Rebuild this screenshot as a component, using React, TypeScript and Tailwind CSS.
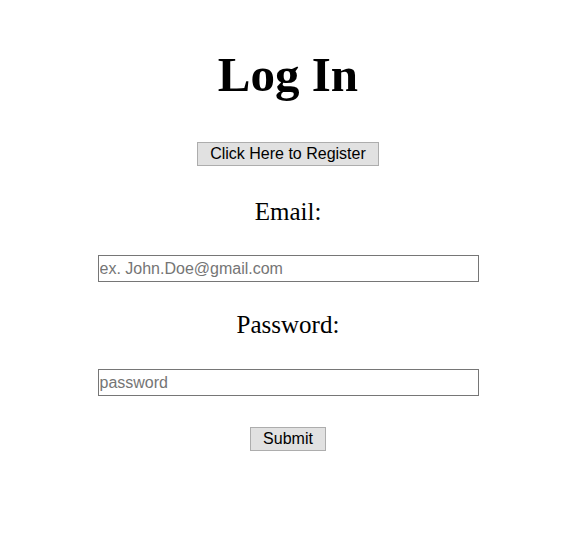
const serif = "font-['Liberation_Serif',serif]";
const sans = "font-['Liberation_Sans',sans-serif]";

export default function App() {
  return (
    <div className="min-h-[548px] w-full bg-white flex flex-col items-center pt-[47px] pr-[3px]">
      <h1 className={`${serif} text-[49px] leading-[56px] font-bold text-black`}>Log In</h1>

      <button
        className={`${sans} mt-[39px] h-[24px] px-[12.5px] bg-[#e1e1e1] border border-[#adadad] text-[16px] leading-none text-black`}
      >
        Click Here to Register
      </button>

      <label className={`${serif} mt-[32px] text-[25px] leading-[28px] text-black`}>Email:</label>
      <input
        type="text"
        placeholder="ex. John.Doe@gmail.com"
        className={`${sans} mt-[29px] w-[381px] h-[27px] border border-[#767676] px-[1px] text-[16px] placeholder:text-[#757575] outline-none`}
      />

      <label className={`${serif} mt-[29px] text-[25px] leading-[28px] text-black`}>Password:</label>
      <input
        type="password"
        placeholder="password"
        className={`${sans} mt-[30px] w-[381px] h-[27px] border border-[#767676] px-[1px] text-[16px] placeholder:text-[#757575] outline-none`}
      />

      <button
        className={`${sans} mt-[31px] h-[24px] px-[12.5px] bg-[#e1e1e1] border border-[#adadad] text-[16px] leading-none text-black`}
      >
        Submit
      </button>
    </div>
  );
}
